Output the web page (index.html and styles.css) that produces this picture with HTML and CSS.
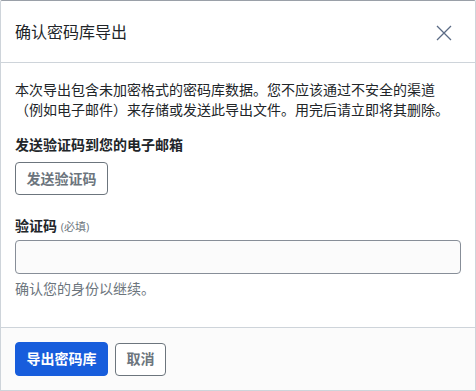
FILE: index.html
```html
<!DOCTYPE html>
<html lang="zh-CN">
<head>
<meta charset="utf-8">
<title>确认密码库导出</title>
<link rel="stylesheet" href="styles.css">
</head>
<body>
<div class="dialog">
  <div class="dialog-header">
    <h1 class="dialog-title">确认密码库导出</h1>
    <button class="close-btn" aria-label="关闭">
      <svg width="16" height="16" viewBox="0 0 16 16"><path d="M1 1L15 15M15 1L1 15" stroke="#5b6b85" stroke-width="1.3" fill="none"/></svg>
    </button>
  </div>
  <div class="dialog-body">
    <p class="warning">本次导出包含未加密格式的密码库数据。您不应该通过不安全的渠道<br>（例如电子邮件）来存储或发送此导出文件。用完后请立即将其删除。</p>
    <div class="send-label">发送验证码到您的电子邮箱</div>
    <button class="btn btn-outline">发送验证码</button>
    <label class="field-label">验证码 <span class="req">(必填)</span></label>
    <input class="field-input" type="text">
    <div class="hint">确认您的身份以继续。</div>
  </div>
  <div class="dialog-footer">
    <button class="btn btn-primary">导出密码库</button>
    <button class="btn btn-outline">取消</button>
  </div>
</div>
</body>
</html>
```
FILE: styles.css
```css
* { box-sizing: border-box; }
html, body { margin: 0; padding: 0; background: #fff; }
body {
  font-family: "Open Sans", "Noto Sans CJK SC", sans-serif;
  color: #212529;
  font-size: 14px;
}
.dialog {
  width: 476px;
  height: 391px;
  border: 1px solid #ced4da;
  border-top-color: #9aa0a8;
  border-radius: 2px 2px 0 0;
  display: flex;
  flex-direction: column;
  background: #fff;
}
.dialog-header {
  height: 62px;
  flex: none;
  display: flex;
  align-items: center;
  justify-content: space-between;
  padding: 0 14px 0 14px;
  border-bottom: 1px solid #ced4da;
}
.dialog-title {
  margin: 0;
  font-size: 16px;
  font-weight: 400;
  line-height: 20px;
  color: #212529;
}
.close-btn {
  border: 0;
  background: none;
  padding: 0;
  width: 16px;
  height: 16px;
  margin-right: 9px;
  margin-top: 2px;
  display: flex;
}
.dialog-body {
  flex: 1;
  padding: 17px 14px 0 14px;
}
.warning {
  margin: 0;
  line-height: 20px;
  font-size: 14px;
  color: #212529;
  white-space: nowrap;
}
.send-label {
  margin-top: 15px;
  font-weight: 700;
  line-height: 20px;
}
.btn {
  font-family: "Open Sans", "Noto Sans CJK SC", sans-serif;
  font-size: 14px;
  font-weight: 700;
  border-radius: 4px;
  padding: 0 10.5px;
  height: 33px;
  line-height: 20px;
  cursor: pointer;
}
.btn-outline {
  background: #fff;
  border: 1px solid #6c757d;
  color: #6c757d;
}
.dialog-body .btn-outline {
  margin-top: 7px;
  display: block;
}
.btn-primary {
  background: #175ddc;
  border: 1px solid #175ddc;
  color: #fff;
  height: 34px;
}
.field-label {
  display: block;
  margin-top: 21px;
  font-weight: 700;
  line-height: 20px;
}
.req {
  font-size: 11px;
  font-weight: 400;
  color: #6c757d;
}
.field-input {
  display: block;
  width: 446px;
  height: 34px;
  margin-top: 3px;
  border: 1px solid #878e98;
  border-radius: 4px;
  background: #fbfbfb;
}
.hint {
  margin-top: 5px;
  color: #6c757d;
  line-height: 20px;
}
.dialog-footer {
  flex: none;
  height: 63px;
  border-top: 1px solid #ced4da;
  background: #fbfbfb;
  display: flex;
  align-items: center;
  gap: 7px;
  padding: 0 14px;
}
```
